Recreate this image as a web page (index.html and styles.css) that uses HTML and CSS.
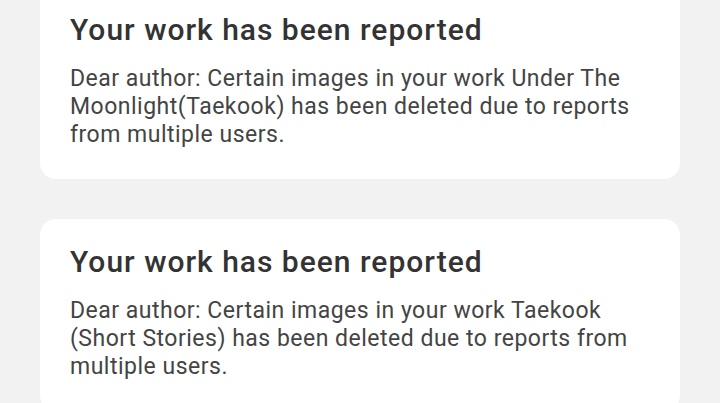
FILE: index.html
```html
<!DOCTYPE html>
<html lang="en">
<head>
  <meta charset="UTF-8" />
  <meta name="viewport" content="width=device-width, initial-scale=1.0"/>
  <title>Notifications</title>
  <link rel="stylesheet" href="styles.css">
</head>
<body>
  <div class="notice-list">
    <div class="notice">
      <h2>Your work has been reported</h2>
      <p>Dear author: Certain images in your work Under The Moonlight(Taekook) has been deleted due to reports from multiple users.</p>
    </div>
    <div class="notice">
      <h2>Your work has been reported</h2>
      <p>Dear author: Certain images in your work Taekook (Short Stories) has been deleted due to reports from multiple users.</p>
    </div>
  </div>
</body>
</html>
```

FILE: styles.css
```css
body {
  font-family: Roboto, "Noto Sans", sans-serif;
  background-color: #f2f2f2;
  margin: 0;
  overflow: hidden;
}

.notice-list {
  display: flex;
  flex-direction: column;
  gap: 40px;
  padding: 0 40px;
  margin-top: -13px;
}

.notice {
  background-color: #fff;
  border-radius: 16px;
  padding: 25px 30px 30px;
}

.notice h2 {
  margin: 0 0 17px;
  font-size: 30px;
  line-height: 36px;
  font-weight: 500;
  letter-spacing: 1px;
  color: #333;
}

.notice p {
  margin: 0;
  font-size: 23px;
  line-height: 28px;
  letter-spacing: 0.5px;
  color: #444;
}
```
